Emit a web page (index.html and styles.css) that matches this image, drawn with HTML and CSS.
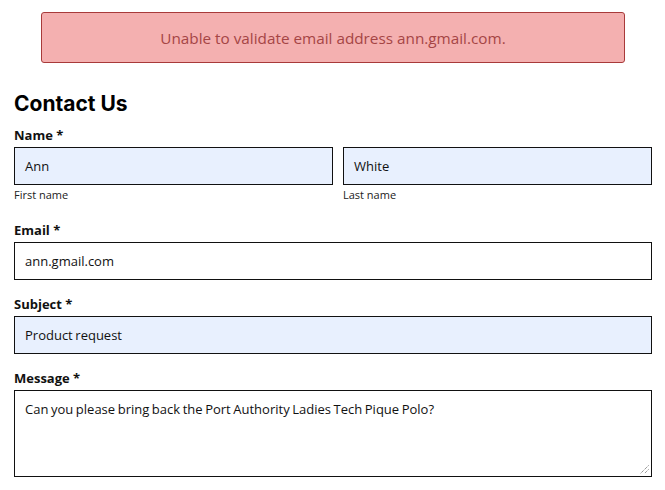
FILE: index.html
```html
<!DOCTYPE html>
<html lang="en">
<head>
<meta charset="utf-8">
<title>Contact Us</title>
<link rel="stylesheet" href="styles.css">
</head>
<body>
<div class="page">
  <div class="alert">Unable to validate email address ann.gmail.com.</div>
  <h1 class="title">Contact Us</h1>
  <form class="form">
    <div class="field name-field">
      <div class="label">Name *</div>
      <div class="name-row">
        <div class="sub">
          <div class="input filled">Ann</div>
          <div class="hint">First name</div>
        </div>
        <div class="sub">
          <div class="input filled">White</div>
          <div class="hint">Last name</div>
        </div>
      </div>
    </div>
    <div class="field">
      <div class="label">Email *</div>
      <div class="input">ann.gmail.com</div>
    </div>
    <div class="field">
      <div class="label">Subject *</div>
      <div class="input filled">Product request</div>
    </div>
    <div class="field">
      <div class="label">Message *</div>
      <div class="input textarea">Can you please bring back the Port Authority Ladies Tech Pique Polo?
        <svg class="grip" width="9" height="9" viewBox="0 0 9 9"><path d="M8.5 0.5 L0.5 8.5 M8.5 4.5 L4.5 8.5" stroke="#666" stroke-width="1" stroke-dasharray="1 1" fill="none"/></svg>
      </div>
    </div>
  </form>
</div>
</body>
</html>
```
FILE: styles.css
```css
* { box-sizing: border-box; }
html, body { margin: 0; background: #fff; }
body { font-family: "Open Sans", "Noto Sans", sans-serif; color: #111; }
.page { padding: 12px 13px 0 14px; }
.alert {
  margin: 0 27px;
  height: 51px;
  background: #f4b0b0;
  border: 1px solid #a83a3a;
  border-radius: 3px;
  color: #a54545;
  font-size: 15.3px;
  display: flex;
  align-items: center;
  justify-content: center;
}
.title {
  margin: 28px 0 0;
  font-family: "Inter", "Noto Sans", sans-serif;
  font-weight: 700;
  font-size: 21px;
  line-height: 26px;
  color: #000;
}
.form { display: flex; flex-direction: column; gap: 16px; margin-top: 10px; }
.name-field { margin-bottom: 5px; }
.label { font-size: 13px; font-weight: 700; line-height: 16px; margin-bottom: 4px; color: #111; }
.name-row { display: grid; grid-template-columns: 319fr 309fr; gap: 10px; }
.input {
  height: 38px;
  border: 1.5px solid #111;
  background: #fff;
  font-size: 13px;
  word-spacing: -0.8px;
  padding: 0 10px;
  display: flex;
  align-items: center;
  color: #111;
}
.input.filled { background: #e8f0fe; }
.hint { font-size: 11px; margin-top: 3px; line-height: 13px; color: #222; }
.textarea { height: 87px; align-items: flex-start; padding-top: 9px; position: relative; }
.grip { position: absolute; right: 2px; bottom: 2px; }
```
